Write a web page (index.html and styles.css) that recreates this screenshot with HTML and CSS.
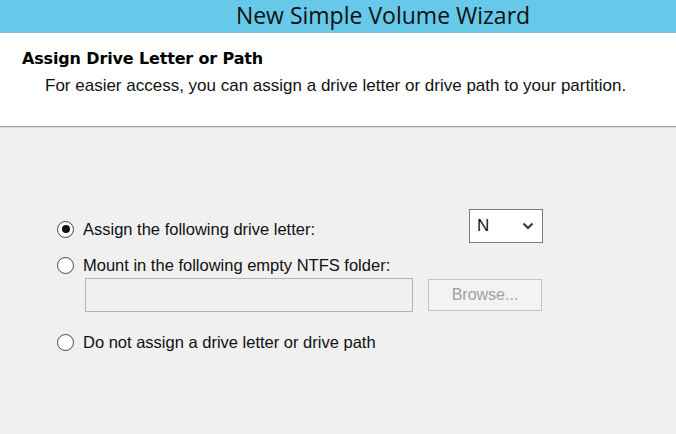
FILE: index.html
```html
<!DOCTYPE html>
<html lang="en">
	<head>
		<meta charset="UTF-8" />
		<meta name="viewport" content="width=device-width, initial-scale=1.0" />
		<title>New Simple Volume Wizard</title>
		<link rel="stylesheet" href="styles.css">
	</head>
	<body>
		<div class="titlebar">New Simple Volume Wizard</div>

		<div class="header">
			<h1>Assign Drive Letter or Path</h1>
			<p>For easier access, you can assign a drive letter or drive path to your partition.</p>
		</div>

		<div class="content">
			<div class="options">
				<div class="row">
					<label class="option">
						<span class="radio checked"></span>
						Assign the following drive letter:
					</label>
					<div class="select">
						<span>N</span>
						<svg width="12" height="8" viewBox="0 0 12 8">
							<path d="M1.5 1.5 L6 6 L10.5 1.5" fill="none" stroke="#333" stroke-width="2"/>
						</svg>
					</div>
				</div>

				<label class="option second">
					<span class="radio"></span>
					Mount in the following empty NTFS folder:
				</label>
				<div class="folder">
					<div class="textbox"></div>
					<div class="button">Browse...</div>
				</div>

				<label class="option third">
					<span class="radio"></span>
					Do not assign a drive letter or drive path
				</label>
			</div>
		</div>
	</body>
</html>
```

FILE: styles.css
```css
body {
	margin: 0;
	width: 676px;
	height: 434px;
	overflow: hidden;
	background: #f0f0f0;
	font-family: "Liberation Sans", Arial, sans-serif;
	color: #111;
}
.titlebar {
	height: 32px;
	line-height: 31px;
	background: #66c9e9;
	border-bottom: 1px solid #8fb4cc;
	text-align: center;
	font-family: "Open Sans", sans-serif;
	font-size: 23px;
	color: #111;
	padding-left: 90px;
}
.header {
	background: #fff;
	height: 94px;
	padding-left: 22px;
	border-bottom: 1px solid #a0a0a0;
	box-sizing: border-box;
	padding-top: 16px;
}
.header h1 {
	margin: 0;
	font-family: "DejaVu Sans", sans-serif;
	font-size: 16px;
	font-weight: bold;
	letter-spacing: -0.15px;
	color: #000;
}
.header p {
	margin: 8px 0 0 23px;
	font-size: 17px;
}
.content {
	border-top: 1px solid #dadada;
	padding: 81px 0 0 57px;
}
.options {
	width: 486px;
}
.row {
	display: flex;
	justify-content: space-between;
	align-items: center;
}
.option {
	display: flex;
	align-items: center;
	gap: 9px;
	font-size: 16.5px;
	height: 20px;
}
.option.second {
	margin-top: 6px;
}
.option.third {
	margin-top: 20px;
}
.radio {
	width: 15px;
	height: 15px;
	border: 1px solid #444;
	border-radius: 50%;
	background: #fff;
	display: flex;
	align-items: center;
	justify-content: center;
}
.radio.checked::after {
	content: "";
	width: 8px;
	height: 8px;
	border-radius: 50%;
	background: #111;
}
.select {
	width: 72px;
	height: 32px;
	margin-bottom: 6px;
	border: 1px solid #7a7a7a;
	background: #fff;
	display: flex;
	align-items: center;
	justify-content: space-between;
	font-size: 17px;
}
.select span {
	padding-left: 7px;
}
.select svg {
	margin-right: 8px;
}
.folder {
	display: flex;
	align-items: center;
	gap: 15px;
	margin: 3px 0 0 28px;
}
.textbox {
	width: 326px;
	height: 32px;
	border: 1px solid #b4b4b4;
	background: #f0f0f0;
}
.button {
	width: 112px;
	height: 30px;
	border: 1px solid #c4c4c4;
	background: #f3f3f3;
	color: #a0a0a0;
	font-size: 16px;
	display: flex;
	align-items: center;
	justify-content: center;
}
```
